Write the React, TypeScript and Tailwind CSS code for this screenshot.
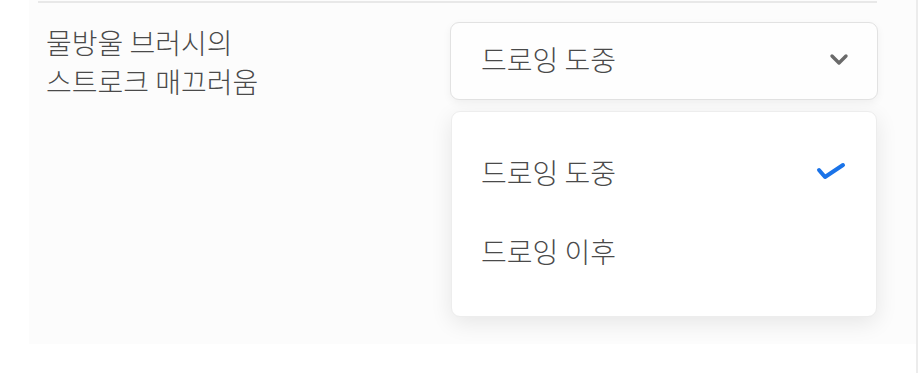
import React from "react";

const font = { fontFamily: '"Noto Sans CJK KR", "Noto Sans", sans-serif' };

export default function App() {
  return (
    <div className="w-[919px] h-[373px] bg-white flex font-light" style={font}>
      <div className="w-[916px] h-full pl-[29px]">
        <div className="w-[887px] h-[344px] bg-[#fcfcfc] flex flex-col">
          <div className="ml-[9px] mt-[1px] w-[839px] h-[2px] bg-[#e8e8e8]" />
          <div className="flex pl-[17px] pt-[19px]">
            <div className="w-[404px] pt-[1px] text-[28px] leading-[39px] text-[#4a4a4a]">
              <div>물방울 브러시의</div>
              <div>스트로크 매끄러움</div>
            </div>
            <div className="w-[428px] flex flex-col gap-[11px]">
              <div className="h-[78px] rounded-[9px] border border-[#e2e2e2] bg-[#fefefe] shadow-[0_3px_8px_rgba(0,0,0,0.05)] flex items-center justify-between pl-[30px] pr-[28px]">
                <span className="text-[28px] leading-[36px] -mt-[5px] text-[#4a4a4a]">드로잉 도중</span>
                <svg width="20" height="14" viewBox="0 0 20 14" className="-mt-[2px]">
                  <polyline points="3,3 10,10 17,3" fill="none" stroke="#6a6a6a" strokeWidth="3.4" strokeLinecap="round" strokeLinejoin="round" />
                </svg>
              </div>
              <div className="mx-[1px] rounded-[9px] border border-[#ededed] bg-white shadow-[0_6px_22px_rgba(0,0,0,0.09)] py-[22px]">
                <div className="h-[80px] flex items-center justify-between pl-[29px] pr-[30px]">
                  <span className="text-[28px] leading-[36px] -mt-[5px] text-[#4a4a4a]">드로잉 도중</span>
                  <svg width="30" height="20" viewBox="0 0 30 20" className="-mt-[6px]">
                    <polyline points="3,9 9,16 27,4" fill="none" stroke="#1a73e8" strokeWidth="4" strokeLinecap="round" strokeLinejoin="round" />
                  </svg>
                </div>
                <div className="h-[80px] flex items-center pl-[29px]">
                  <span className="text-[28px] leading-[36px] -mt-[7px] text-[#4a4a4a]">드로잉 이후</span>
                </div>
              </div>
            </div>
          </div>
        </div>
      </div>
      <div className="w-[2px] h-full bg-[#ececec]" />
    </div>
  );
}
